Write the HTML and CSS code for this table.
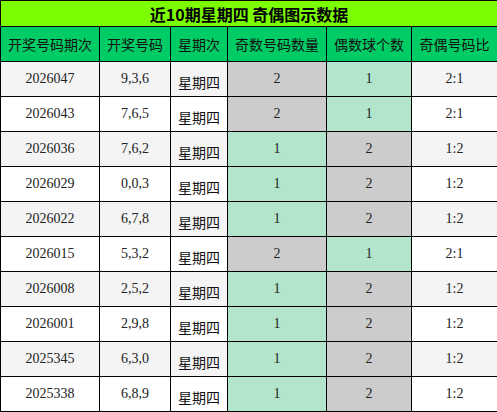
FILE: index.html
```html
<!DOCTYPE html>
<html lang="zh">
<head>
<meta charset="utf-8">
<link rel="stylesheet" href="styles.css">
</head>
<body>
<table class="tbl">
  <colgroup>
    <col class="c1"><col class="c2"><col class="c3"><col class="c4"><col class="c5"><col class="c6">
  </colgroup>
  <tr class="title"><th colspan="6">近10期星期四 奇偶图示数据</th></tr>
  <tr class="head"><th>开奖号码期次</th><th>开奖号码</th><th>星期次</th><th>奇数号码数量</th><th>偶数球个数</th><th>奇偶号码比</th></tr>
  <tr class="odd"><td>2026047</td><td>9,3,6</td><td class="wk">星期四</td><td class="gray">2</td><td class="green">1</td><td>2:1</td></tr>
  <tr class="even"><td>2026043</td><td>7,6,5</td><td class="wk">星期四</td><td class="gray">2</td><td class="green">1</td><td>2:1</td></tr>
  <tr class="odd"><td>2026036</td><td>7,6,2</td><td class="wk">星期四</td><td class="green">1</td><td class="gray">2</td><td>1:2</td></tr>
  <tr class="even"><td>2026029</td><td>0,0,3</td><td class="wk">星期四</td><td class="green">1</td><td class="gray">2</td><td>1:2</td></tr>
  <tr class="odd"><td>2026022</td><td>6,7,8</td><td class="wk">星期四</td><td class="green">1</td><td class="gray">2</td><td>1:2</td></tr>
  <tr class="even"><td>2026015</td><td>5,3,2</td><td class="wk">星期四</td><td class="gray">2</td><td class="green">1</td><td>2:1</td></tr>
  <tr class="odd"><td>2026008</td><td>2,5,2</td><td class="wk">星期四</td><td class="green">1</td><td class="gray">2</td><td>1:2</td></tr>
  <tr class="even"><td>2026001</td><td>2,9,8</td><td class="wk">星期四</td><td class="green">1</td><td class="gray">2</td><td>1:2</td></tr>
  <tr class="odd"><td>2025345</td><td>6,3,0</td><td class="wk">星期四</td><td class="green">1</td><td class="gray">2</td><td>1:2</td></tr>
  <tr class="even"><td>2025338</td><td>6,8,9</td><td class="wk">星期四</td><td class="green">1</td><td class="gray">2</td><td>1:2</td></tr>
</table>
</body>
</html>
```
FILE: styles.css
```css
html, body {
  margin: 0;
  padding: 0;
  background: #ffffff;
}
.tbl {
  width: 497px;
  border-collapse: collapse;
  table-layout: fixed;
  font-family: "Liberation Serif", "Noto Sans CJK SC", serif;
  font-size: 14px;
  color: #222;
}
.c1 { width: 99px; }
.c2 { width: 71px; }
.c3 { width: 57px; }
.c4 { width: 99px; }
.c5 { width: 85px; }
.c6 { width: 86px; }
.tbl th, .tbl td {
  border: 1px solid #000;
  padding: 0;
  text-align: center;
}
.title th {
  height: 25px;
  background: #7cfc00;
  font-family: "Noto Sans CJK SC", sans-serif;
  font-weight: bold;
  font-size: 16px;
  color: #000;
  line-height: 24px;
}
.head th {
  height: 34px;
  background: #00cc66;
  font-family: "Noto Sans CJK SC", sans-serif;
  font-weight: normal;
  font-size: 14px;
  color: #111;
}
.tbl td {
  height: 34px;
}
.odd td { background: #f4f4f4; }
.even td { background: #ffffff; }
.tbl td.wk {
  font-family: "Noto Sans CJK SC", sans-serif;
  padding-top: 5px;
  height: 29px;
  color: #111;
}
.tbl td.gray { background: #cccccc; }
.tbl td.green { background: #b3e5cc; }
```
